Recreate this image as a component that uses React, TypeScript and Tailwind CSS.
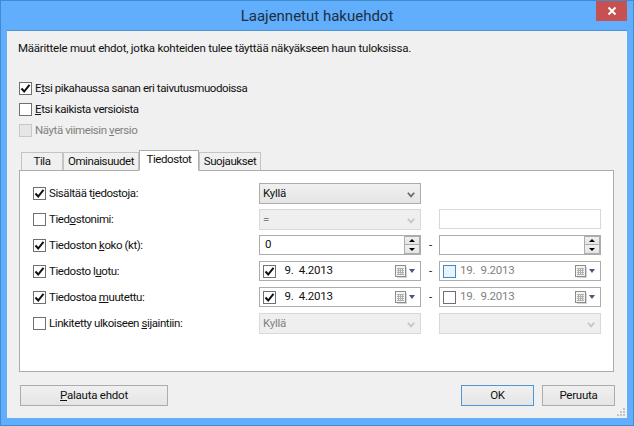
import type { ReactNode } from 'react';

const Check = ({ checked, disabled, focus }: { checked?: boolean; disabled?: boolean; focus?: boolean }) => (
  <span
    className={`flex h-[13px] w-[13px] shrink-0 items-center justify-center border ${
      disabled ? 'border-[#c8c8c8] bg-[#e6e6e6]' : focus ? 'border-[#3c8ccc] bg-[#e8f4fc]' : 'border-[#707070] bg-white'
    }`}
  >
    {checked && (
      <svg width="11" height="11" viewBox="0 0 11 11">
        <path d="M1.5 5.5 L4.2 8.5 L9.5 1.8" fill="none" stroke="#111" strokeWidth="2" />
      </svg>
    )}
  </span>
);

const Chevron = ({ disabled }: { disabled?: boolean }) => (
  <svg width="8" height="6" viewBox="0 0 8 6" className="absolute right-[5px] top-[8px]">
    <path d="M0.8 0.8 L4 4.4 L7.2 0.8" fill="none" stroke={disabled ? '#c4c4c4' : '#6a6a6a'} strokeWidth="1.7" />
  </svg>
);

const Select = ({ value, disabled }: { value?: string; disabled?: boolean }) => (
  <div
    className={`relative flex h-[21px] items-center border pl-[3px] ${
      disabled
        ? 'border-[#d9d9d9] bg-[#efefef] text-[#7f7f7f]'
        : 'border-[#acacac] bg-gradient-to-b from-[#f0f0f0] to-[#e5e5e5] text-[#111]'
    }`}
  >
    {value}
    <Chevron disabled={disabled} />
  </div>
);

const Spinner = () => (
  <div className="ml-auto flex h-full w-[16px] shrink-0 flex-col">
    <div className="flex h-1/2 items-center justify-center border border-[#acacac] bg-gradient-to-b from-[#f0f0f0] to-[#e5e5e5]">
      <span className="h-0 w-0 border-x-[3px] border-b-[3px] border-x-transparent border-b-black" />
    </div>
    <div className="-mt-px flex h-[calc(50%+1px)] items-center justify-center border border-[#acacac] bg-gradient-to-b from-[#f0f0f0] to-[#e5e5e5]">
      <span className="h-0 w-0 border-x-[3px] border-t-[3px] border-x-transparent border-t-black" />
    </div>
  </div>
);

const SpinInput = ({ value }: { value?: string }) => (
  <div className="flex h-[20px] self-start items-center border border-[#acacac] bg-white">
    {value && <span className="pl-[5px] text-[#111]">{value}</span>}
    <Spinner />
  </div>
);

const CalendarIcon = () => (
  <svg width="12" height="13" viewBox="0 0 12 13" className="shrink-0">
    <rect x="2" y="2" width="10" height="11" fill="#999" opacity="0.4" />
    <rect x="0.5" y="0.5" width="10" height="11" fill="#f4f4f4" stroke="#8c8c8c" />
    <path d="M2 3.5h7M2 5.5h7M2 7.5h7M2 9.5h7M3.5 3v7M5.5 3v7M7.5 3v7" stroke="#b0b0b0" strokeWidth="1" />
  </svg>
);

const DateInput = ({ checked, focus, value, dim }: { checked?: boolean; focus?: boolean; value: string; dim?: boolean }) => (
  <div className="flex h-[20px] self-start items-center border border-[#acacac] bg-white pl-[3px] pr-[5px]">
    <Check checked={checked} focus={focus} />
    <span className={`whitespace-pre ${dim ? 'ml-[4px] text-[#7f7f7f]' : 'ml-[6px] text-[#111]'}`}>{value}</span>
    <div className="ml-auto flex items-center gap-[2px]">
      <CalendarIcon />
      <span className="h-0 w-0 border-x-[3.5px] border-t-[4px] border-x-transparent border-t-[#46597a]" />
    </div>
  </div>
);

const Dash = () => <div className="pl-[1px] text-center text-[#111]">-</div>;

const Label = ({ checked, children }: { checked?: boolean; children: ReactNode }) => (
  <div className="flex items-center gap-[3px] tracking-[-0.42px] text-[#111]">
    <Check checked={checked} />
    <span>{children}</span>
  </div>
);

const Tab = ({ active, className, children }: { active?: boolean; className: string; children: ReactNode }) => (
  <div
    className={`flex items-center justify-center border tracking-[-0.42px] text-[#111] ${
      active ? 'z-10 -mb-px h-[21px] border-[#acacac] border-b-white bg-white pb-[2px]' : 'h-[18px] border-[#c4c4c4] border-b-0 bg-[#f0f0f0]'
    } ${className}`}
  >
    {children}
  </div>
);

const Button = ({ className, children }: { className: string; children: ReactNode }) => (
  <div className={`flex h-[21px] items-center justify-center border bg-gradient-to-b from-[#f0f0f0] to-[#e5e5e5] text-[#111] ${className}`}>
    {children}
  </div>
);

export default function App() {
  return (
    <div className="relative flex h-[426px] w-[634px] flex-col overflow-hidden border border-[#3f8bd0] bg-[#60aefc] font-['Roboto',sans-serif] text-[11.5px] leading-none tracking-[-0.24px]">
      {/* otsikkopalkki */}
      <div className="flex h-[29px] shrink-0 items-center justify-center pt-[1px] text-[15px] tracking-normal text-[#1c2f44]">Laajennetut hakuehdot</div>
      <div className="absolute right-[6px] top-0 flex h-[20px] w-[31px] items-center justify-center bg-[#c75050]">
        <svg width="10" height="10" viewBox="0 0 10 10">
          <path d="M1.5 1.5 L8.5 8.5 M8.5 1.5 L1.5 8.5" stroke="#fff" strokeWidth="2" />
        </svg>
      </div>

      <div className="relative mx-[6px] flex h-[388px] flex-col border-t border-[#4f91cf] bg-[#f0f0f0] pl-[12px] pr-[13px]">
        <p className="mt-[12px] -ml-px h-[13px] text-[#111]">Määrittele muut ehdot, jotka kohteiden tulee täyttää näkyäkseen haun tuloksissa.</p>

        <div className="mt-[26px] flex flex-col gap-[8px]">
          <Label checked>E<u>t</u>si pikahaussa sanan eri taivutusmuodoissa</Label>
          <Label><u>E</u>tsi kaikista versioista</Label>
          <div className="flex items-center gap-[3px] tracking-[-0.42px] text-[#7f7f7f]">
            <Check disabled />
            <span>Näytä viimeisin <u>v</u>ersio</span>
          </div>
        </div>

        <div className="mt-[13px] flex h-[20px] items-end pl-[2px]">
          <Tab className="w-[42px]">Tila</Tab>
          <Tab className="w-[76px]">Ominaisuudet</Tab>
          <Tab active className="w-[60px]">Tiedostot</Tab>
          <Tab className="w-[62px]">Suojaukset</Tab>
        </div>

        <div className="grid h-[202px] auto-rows-[21px] grid-cols-[226px_162px_18px_162px] content-start items-center gap-y-[5px] border border-[#acacac] bg-white pl-[13px] pt-[12px]">
          <Label checked>Sisältää t<u>i</u>edostoja:</Label>
          <Select value="Kyllä" />
          <div />
          <div />

          <Label>Tied<u>o</u>stonimi:</Label>
          <Select value="=" disabled />
          <div />
          <div className="h-[20px] self-start border border-[#d9d9d9] bg-white" />

          <Label checked>Tiedoston <u>k</u>oko (kt):</Label>
          <SpinInput value="0" />
          <Dash />
          <SpinInput />

          <Label checked>Tiedosto l<u>u</u>otu:</Label>
          <DateInput checked value=" 9.  4.2013" />
          <Dash />
          <DateInput focus dim value="19.  9.2013" />

          <Label checked>Tiedostoa <u>m</u>uutettu:</Label>
          <DateInput checked value=" 9.  4.2013" />
          <Dash />
          <DateInput dim value="19.  9.2013" />

          <Label>Linkitetty ulkoiseen <u>s</u>ijaintiin:</Label>
          <Select value="Kyllä" disabled />
          <div />
          <Select disabled />
        </div>

        <div className="mt-[13px] flex items-center">
          <Button className="ml-px w-[148px] border-[#acacac]"><span><u>P</u>alauta ehdot</span></Button>
          <Button className="ml-auto w-[73px] border-[#4f97d4]">OK</Button>
          <Button className="ml-[8px] mr-[-1px] w-[73px] border-[#acacac]">Peruuta</Button>
        </div>

        {/* koonmuutoskahva */}
        <svg width="10" height="10" viewBox="0 0 10 10" className="absolute bottom-[1px] right-[1px]">
          <path d="M7 1h2v2H7zM4 4h2v2H4zM7 4h2v2H7zM1 7h2v2H1zM4 7h2v2H4zM7 7h2v2H7z" fill="#c4c4c4" />
        </svg>
      </div>
    </div>
  );
}
